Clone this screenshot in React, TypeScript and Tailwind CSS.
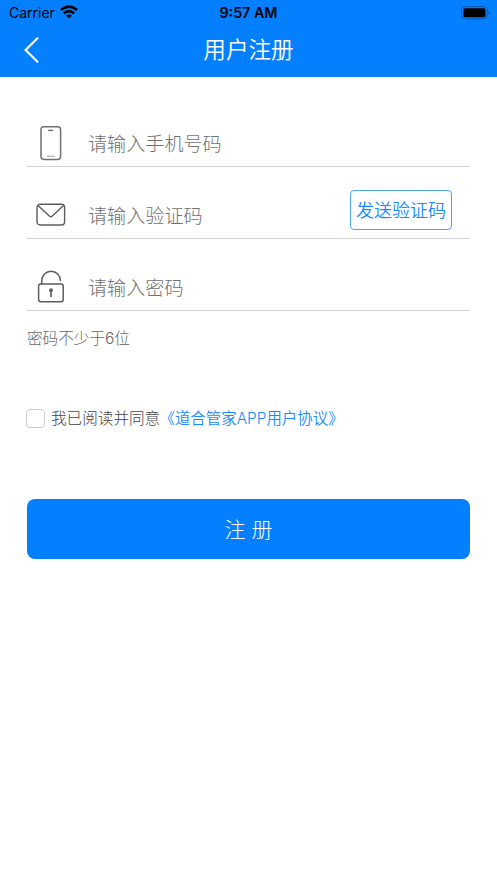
import type { ReactNode } from "react";

function Row({ icon, label, children }: { icon: ReactNode; label: string; children?: ReactNode }) {
  return (
    <div className="flex h-[72px] items-center border-b border-[#d3d3d3] pt-[25px] text-[#707070]">
      <div className="flex w-12 justify-center">{icon}</div>
      <span className="ml-[13px] flex-1 pt-[3px] text-[19.1px] leading-none font-light">{label}</span>
      {children}
    </div>
  );
}

function PhoneIcon() {
  return (
    <svg width="22" height="35" viewBox="0 0 22 35" fill="none" stroke="#707070" strokeWidth="1.5">
      <rect x="1" y=".8" width="19.6" height="32.6" rx="2.8" />
      <path d="M8.2 4.4h5" strokeWidth="1.5" />
      <path d="M6.8 30.3h8" stroke="#aaa" strokeWidth="1.2" />
    </svg>
  );
}

function MailIcon() {
  return (
    <svg width="30" height="24" viewBox="0 0 30 24" fill="none" stroke="#5c5c5c" strokeWidth="1.4" strokeLinejoin="round">
      <rect x="1" y="1.2" width="27.6" height="20.8" rx="3.2" />
      <path d="M2 2.5L13.6 13.2Q14.8 14.3 16 13.2L27.6 2.5" />
    </svg>
  );
}

function LockIcon() {
  return (
    <svg width="28" height="34" viewBox="0 0 28 34" fill="none" stroke="#5c5c5c" strokeWidth="1.5">
      <rect x="1.6" y="14" width="24.6" height="17.8" rx="2.2" />
      <path d="M4.8 14V10.6A9.3 9.3 0 0 1 23.4 10.6" strokeLinecap="round" />
      <path d="M14 20.6v6.5" strokeWidth="1.6" />
      <circle cx="14" cy="20.2" r="1.9" fill="#5c5c5c" stroke="none" />
    </svg>
  );
}

export default function App() {
  return (
    <div className="min-h-[883px] bg-white font-['Inter','Noto_Sans_CJK_SC',sans-serif]">
      <header className="h-[77px] bg-[#0480ff] text-white">
        <div className="grid h-[25px] grid-cols-3 items-center text-black">
          <div className="flex items-center gap-[5px] pl-[9px] text-[14px]">
            Carrier
            <svg className="-mt-px" width="18" height="14" viewBox="0 0 18 14" fill="none" stroke="black" strokeWidth="2.6">
              <path d="M.9 5.1Q9-1.9 17.1 5.1M3.8 8.3Q9 3.9 14.2 8.3" />
              <path d="M6 10.6Q9 8.4 12 10.6L9 13.6Z" fill="black" stroke="none" />
            </svg>
          </div>
          <span className="text-center text-[14.3px] font-semibold">9:57 AM</span>
          <div className="flex justify-end pr-[7px]">
            <svg width="29" height="14" viewBox="0 0 29 14">
              <rect x=".6" y=".6" width="25.6" height="12.4" rx="3.8" fill="none" stroke="#0459b0" />
              <rect x="2.4" y="2.3" width="22" height="9" rx="1.8" />
              <path d="M27.2 4.8v4q1.4-.5 1.4-2t-1.4-2" fill="#0459b0" />
            </svg>
          </div>
        </div>
        <div className="grid h-[51px] grid-cols-3 items-center">
          <svg className="-mt-px ml-6" width="16" height="26" viewBox="0 0 16 26" fill="none" stroke="white" strokeWidth="2.2" strokeLinecap="round">
            <path d="M13.4 1.3L1.6 13L13.4 24.7" />
          </svg>
          <h1 className="text-center text-[22.6px] leading-none font-[350]">用户注册</h1>
        </div>
      </header>
      <main className="px-[27px] pt-[18px]">
        <Row label="请输入手机号码" icon={<PhoneIcon />} />
        <Row label="请输入验证码" icon={<MailIcon />}>
          <button className="mr-[18px] -mt-[11px] h-10 w-[102px] rounded-[4px] border border-[#4ba3ff] pt-px text-[18px] font-[350] text-[#1a8bff]">发送验证码</button>
        </Row>
        <Row label="请输入密码" icon={<LockIcon />} />
        <p className="mt-5 text-[15.6px] leading-4 font-light text-[#666]">密码不少于6位</p>
        <label className="mt-[60px] flex h-[22px] items-center text-[15.6px] font-light text-[#444]">
          <span className="mr-1.5 -ml-px h-[19px] w-[19px] rounded-[4px] border border-[#ccc]" />
          <span className="flex items-center pt-px">
            我已阅读并同意
            <span className="ml-[7px] text-[15.45px] font-[350] text-[#1a8bff] [font-feature-settings:'halt']">《道合管家APP用户协议》</span>
          </span>
        </label>
        <button className="mt-[70px] h-[60px] w-full rounded-[8px] bg-[#0480ff] pt-px text-[21px] font-light text-white">注 册</button>
      </main>
    </div>
  );
}
